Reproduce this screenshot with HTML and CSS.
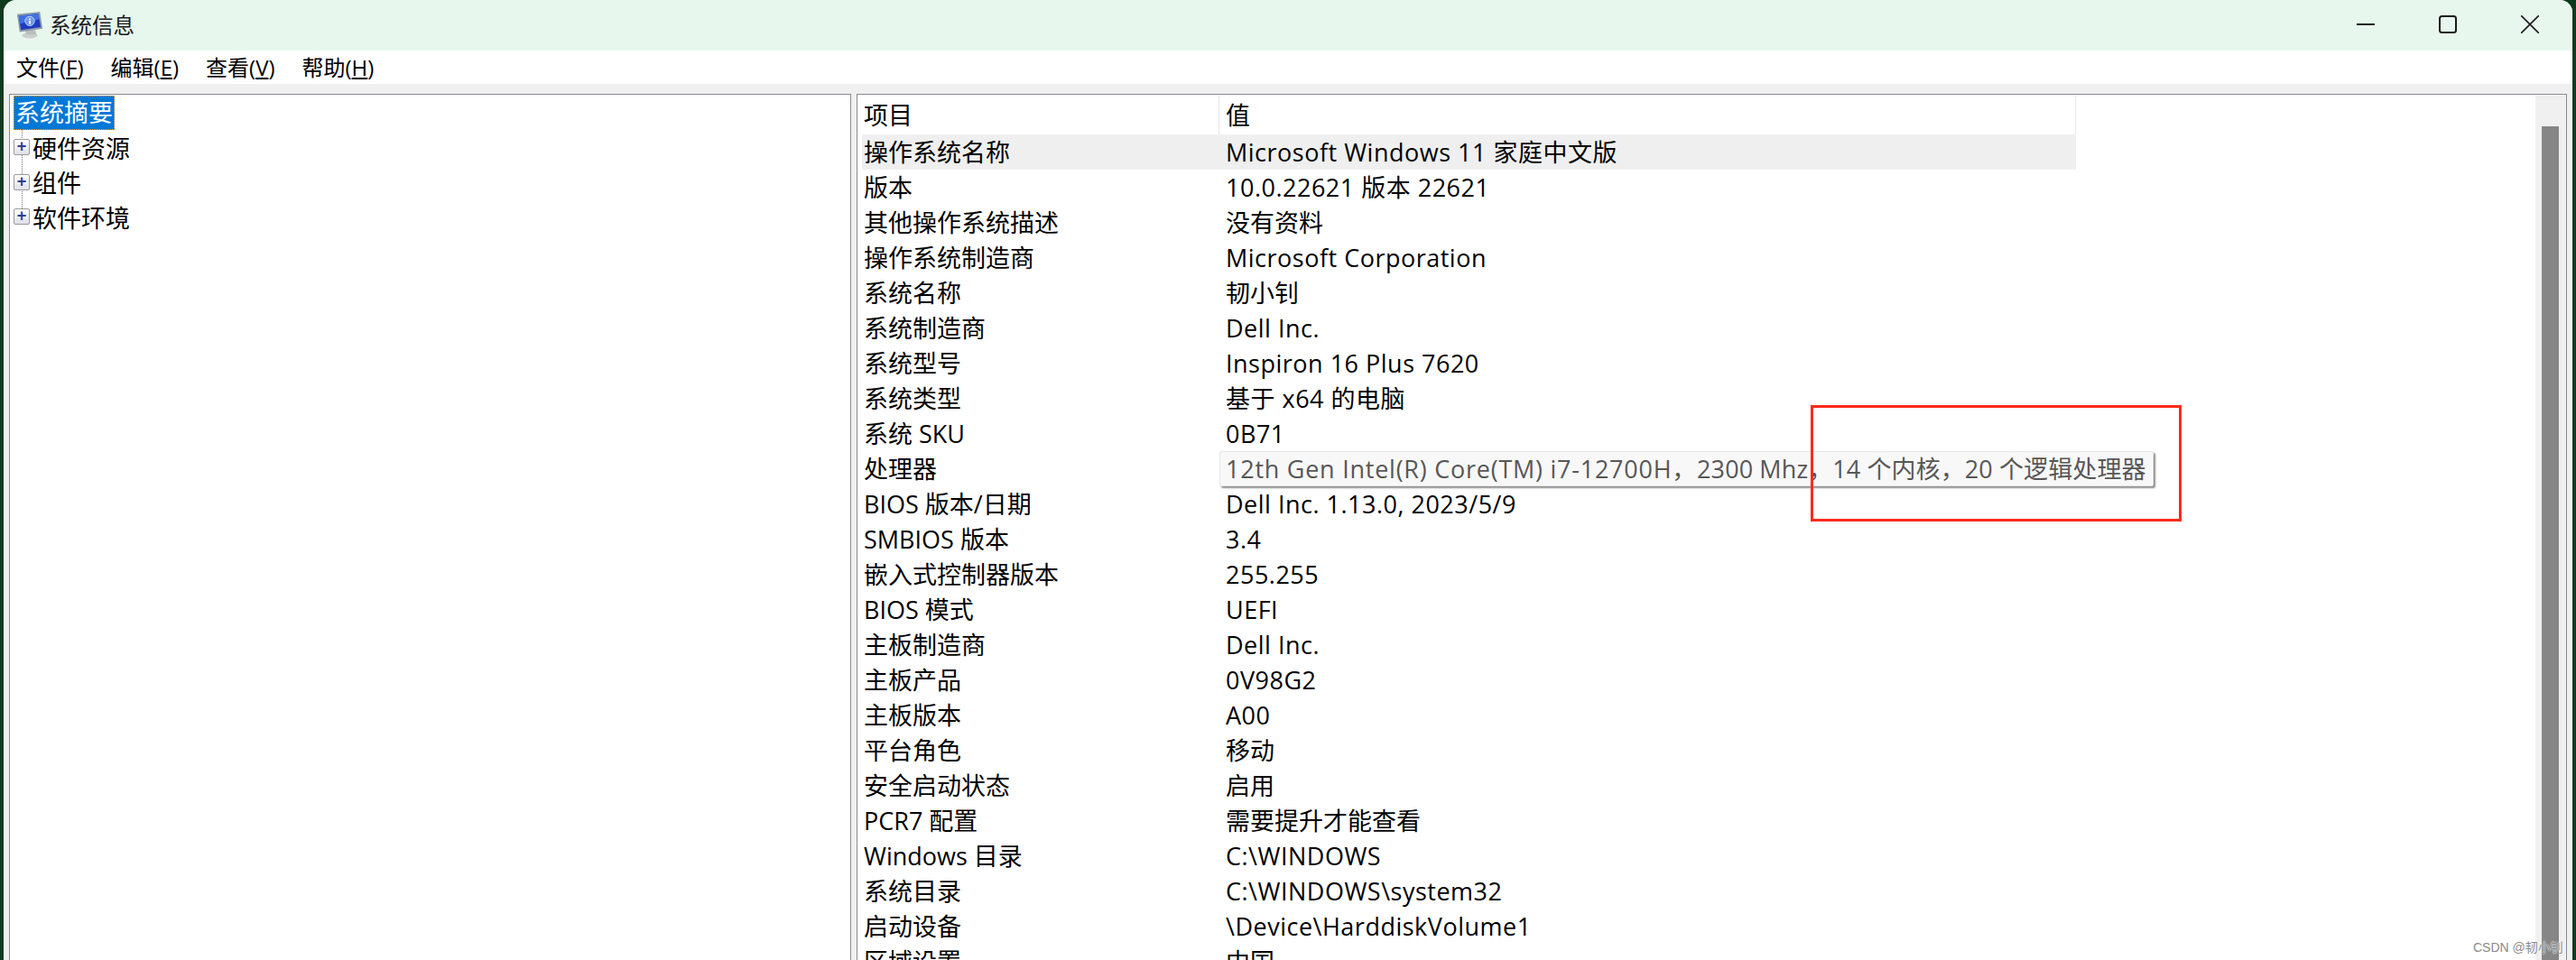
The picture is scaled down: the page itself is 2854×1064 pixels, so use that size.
FILE: index.html
```html
<!DOCTYPE html>
<html lang="zh-CN">
<head>
<meta charset="utf-8">
<title>系统信息</title>
<link rel="stylesheet" href="styles.css">
</head>
<body>
<div class="window">
  <header class="titlebar">
    <svg class="appicon" width="30" height="32" viewBox="0 0 32 32">
      <ellipse cx="16" cy="28" rx="9" ry="3.5" fill="#c9cfcc"/>
      <path d="M10 21h12l2 6H12z" fill="#b9bfc0"/>
      <path d="M1 3 L28 0 L31 20 L4 24 Z" fill="#8f9aa6"/>
      <path d="M3 5 L26 2 L29 18 L5.500 21.500 Z" fill="#1f3cc0"/>
      <path d="M3 5 L26 2 L27 9 L4 14 Z" fill="#3f72e0"/>
      <circle cx="16" cy="11" r="5.500" fill="#6f97e8" stroke="#c8d8f5"/>
      <path d="M15 8h2v1.500h-2zM15 10.500h2v4h-2z" fill="#fff"/>
    </svg>
    <span class="title">系统信息</span>
    <div class="controls">
      <svg class="ctl" width="20" height="20" viewBox="0 0 20 20"><path d="M0 10h20" stroke="#1a1a1a" stroke-width="2"/></svg>
      <svg class="ctl" width="20" height="20" viewBox="0 0 20 20"><rect x="1" y="1" width="18" height="18" rx="2.500" fill="none" stroke="#1a1a1a" stroke-width="2"/></svg>
      <svg class="ctl" width="20" height="20" viewBox="0 0 20 20"><path d="M0 0l20 20M20 0L0 20" stroke="#1a1a1a" stroke-width="1.600"/></svg>
    </div>
  </header>
  <nav class="menubar">
    <span class="menu">文件(<u>F</u>)</span>
    <span class="menu">编辑(<u>E</u>)</span>
    <span class="menu">查看(<u>V</u>)</span>
    <span class="menu">帮助(<u>H</u>)</span>
  </nav>
  <main class="panes">
    <section class="tree">
      <div class="tree-line"></div>
      <div class="node"><span class="selected">系统摘要</span></div>
      <div class="node"><span class="plus">+</span>硬件资源</div>
      <div class="node"><span class="plus">+</span>组件</div>
      <div class="node"><span class="plus">+</span>软件环境</div>
    </section>
    <section class="list">
      <div class="table">
        <div class="row head"><span class="c1">项目</span><span class="c2 zh">值</span></div>
        <div class="row hl"><span class="c1">操作系统名称</span><span class="c2">Microsoft Windows 11 家庭中文版</span></div>
        <div class="row"><span class="c1">版本</span><span class="c2">10.0.22621 版本 22621</span></div>
        <div class="row"><span class="c1">其他操作系统描述</span><span class="c2 zh">没有资料</span></div>
        <div class="row"><span class="c1">操作系统制造商</span><span class="c2">Microsoft Corporation</span></div>
        <div class="row"><span class="c1">系统名称</span><span class="c2 zh">韧小钊</span></div>
        <div class="row"><span class="c1">系统制造商</span><span class="c2">Dell Inc.</span></div>
        <div class="row"><span class="c1">系统型号</span><span class="c2">Inspiron 16 Plus 7620</span></div>
        <div class="row"><span class="c1">系统类型</span><span class="c2">基于 x64 的电脑</span></div>
        <div class="row"><span class="c1">系统 SKU</span><span class="c2">0B71</span></div>
        <div class="row"><span class="c1">处理器</span><span class="c2 tip"><span class="tip-lead">12th Gen Intel(R) Core(TM) i7-12700H，</span>2300 Mhz，14 个内核，20 个逻辑处理器</span></div>
        <div class="row"><span class="c1">BIOS 版本/日期</span><span class="c2">Dell Inc. 1.13.0, 2023/5/9</span></div>
        <div class="row"><span class="c1">SMBIOS 版本</span><span class="c2">3.4</span></div>
        <div class="row"><span class="c1">嵌入式控制器版本</span><span class="c2">255.255</span></div>
        <div class="row"><span class="c1">BIOS 模式</span><span class="c2">UEFI</span></div>
        <div class="row"><span class="c1">主板制造商</span><span class="c2">Dell Inc.</span></div>
        <div class="row"><span class="c1">主板产品</span><span class="c2">0V98G2</span></div>
        <div class="row"><span class="c1">主板版本</span><span class="c2">A00</span></div>
        <div class="row"><span class="c1">平台角色</span><span class="c2 zh">移动</span></div>
        <div class="row"><span class="c1">安全启动状态</span><span class="c2 zh">启用</span></div>
        <div class="row"><span class="c1">PCR7 配置</span><span class="c2 zh">需要提升才能查看</span></div>
        <div class="row"><span class="c1">Windows 目录</span><span class="c2">C:\WINDOWS</span></div>
        <div class="row"><span class="c1">系统目录</span><span class="c2">C:\WINDOWS\system32</span></div>
        <div class="row"><span class="c1">启动设备</span><span class="c2">\Device\HarddiskVolume1</span></div>
        <div class="row"><span class="c1">区域设置</span><span class="c2 zh">中国</span></div>
      </div>
      <div class="scrollbar"><div class="thumb"></div></div>
    </section>
  </main>
</div>
<div class="redbox"></div>
<div class="watermark">CSDN @韧小钊</div>
</body>
</html>
```
FILE: styles.css
```css
* { box-sizing: border-box; }
html, body { margin: 0; padding: 0; height: 1064px; overflow: hidden; background: #0f3a1e; }
body {
  position: relative;
  font-family: "Open Sans", "Noto Sans CJK SC", sans-serif;
  font-size: 27px;
  color: #000;
}
.window {
  width: 2846px;
  height: 1064px;
  margin-left: 4px;
  background: #f0f0f0;
  border-radius: 14px 14px 0 0;
  overflow: hidden;
  display: flex;
  flex-direction: column;
}
.titlebar {
  height: 56px;
  flex: none;
  background: #e7f7ed;
  display: flex;
  align-items: center;
  padding-left: 14px;
}
.appicon { flex: none; }
.title { margin: -2px 0 0 7px; font-size: 23.500px; color: #1a1a1a; }
.controls {
  margin-left: auto;
  display: flex;
  gap: 71px;
  padding-right: 37px;
  height: 56px;
  align-items: center;
}
.ctl { flex: none; width: 20px; height: 20px; margin-top: -2px; }
.menubar {
  height: 37px;
  flex: none;
  background: #fff;
  display: flex;
  align-items: center;
  padding-left: 14px;
  gap: 30px;
  font-size: 24px;
}
.menu { line-height: 37px; white-space: nowrap; }
.panes {
  flex: 1;
  display: flex;
  gap: 6px;
  padding: 11px 6px 0 6px;
  min-height: 0;
}
.tree {
  position: relative;
  width: 933px;
  flex: none;
  background: #fff;
  border: 1px solid #8a8a94;
  border-bottom: 0;
  padding: 1px 0 0 4px;
}
.tree-line {
  position: absolute;
  left: 13px;
  top: 38px;
  height: 88px;
  border-left: 1px dotted #777;
}
.node {
  position: relative;
  height: 38.300px;
  display: flex;
  align-items: center;
  white-space: nowrap;
}
.selected {
  display: block;
  background: #0078d7;
  color: #fff;
  outline: 1px dotted #ff9a20;
  outline-offset: -1px;
  height: 38px;
  line-height: 38px;
  padding: 0 2px;
}
.plus {
  flex: none;
  width: 18px;
  height: 18px;
  margin-right: 3px;
  border: 1px solid #9a9a9a;
  border-radius: 2px;
  background: linear-gradient(#fff, #dfe0e8);
  color: #2c3f8f;
  font-family: "Liberation Sans", sans-serif;
  font-size: 18px;
  font-weight: 700;
  line-height: 15px;
  text-align: center;
}
.list {
  flex: 1;
  position: relative;
  display: flex;
  min-width: 0;
  background: #fff;
  border: 1px solid #8a8a94;
  border-bottom: 0;
  padding: 1px 0 0 5px;
}
.table { width: 1345px; flex: none; }
.row {
  height: 39px;
  display: flex;
  align-items: center;
  white-space: nowrap;
}
.row.head {
  height: 43px;
  box-shadow: inset -1px 0 #e8e8e8;
}
.row.hl { background: #efefef; }
.c1 { width: 395px; flex: none; padding-left: 2px; height: 100%; line-height: 40px; }
.c2 { flex: none; padding-left: 8px; height: 100%; line-height: 40px; letter-spacing: 0.500px; }
.c2.zh { letter-spacing: 0; }
.head .c1, .head .c2 { line-height: 44px; }
.head .c2 { width: 950px; border-left: 1px solid #e4e4e4; padding-left: 7px; }
.c2.tip {
  height: 39px;
  width: 1035px;
  margin-left: 1px;
  padding-left: 6px;
  line-height: 37px;
  letter-spacing: 0.100px;
  color: #575757;
  background: #f8f8f8;
  border: 1px solid #e6e6e6;
  border-radius: 2px;
  box-shadow: 2px 2px 2px #8d8d8d;
  white-space: nowrap;
  position: relative;
}
.tip-lead { letter-spacing: 0.750px; }
.scrollbar {
  position: absolute;
  right: 0;
  top: 1px;
  bottom: 0;
  width: 34px;
  background: #f0f0f0;
  padding: 34px 8px 0 7px;
}
.thumb { height: 100%; background: #868686; }
.redbox {
  position: absolute;
  left: 2006px;
  top: 449px;
  width: 411px;
  height: 129px;
  border: 3px solid #ff2a1a;
}
.watermark {
  position: absolute;
  left: 2740px;
  top: 1039px;
  font-family: "Liberation Sans", "Noto Sans CJK SC", sans-serif;
  font-size: 14px;
  color: #8a8a8a;
  text-shadow: 0 0 2px #fff, 0 0 1px #fff;
  white-space: nowrap;
}
```
